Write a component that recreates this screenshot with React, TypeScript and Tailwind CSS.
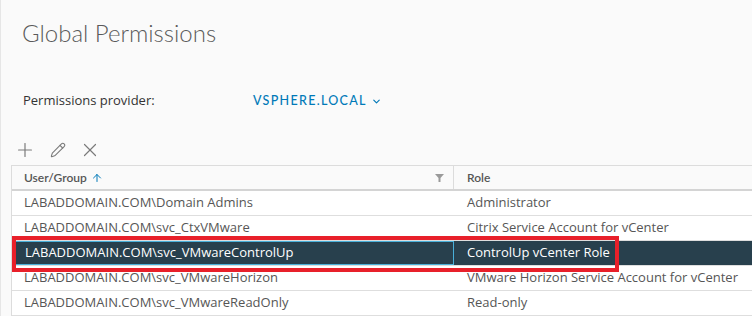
import { Plus, Pencil, X, ChevronDown, ArrowUp } from "lucide-react";

const ROWS = [
  { user: "LABADDOMAIN.COM\\Domain Admins", role: "Administrator" },
  { user: "LABADDOMAIN.COM\\svc_CtxVMware", role: "Citrix Service Account for vCenter" },
  { user: "LABADDOMAIN.COM\\svc_VMwareControlUp", role: "ControlUp vCenter Role", selected: true },
  { user: "LABADDOMAIN.COM\\svc_VMwareHorizon", role: "VMware Horizon Service Account for vCenter" },
  { user: "LABADDOMAIN.COM\\svc_VMwareReadOnly", role: "Read-only" },
];

export default function App() {
  return (
    <div
      className="h-[316px] w-[752px] overflow-hidden border-l border-[#e6e6e6] bg-[#fafafa] text-[#565656]"
      style={{ fontFamily: "Lato, 'Open Sans', sans-serif" }}
    >
      <h1 className="ml-[21px] pt-[17px] h-[49px] text-[24px] leading-[32px] font-light text-[#5a5a5a]">
        Global Permissions
      </h1>

      <div className="mt-[41px] flex h-[22px] items-center text-[13px]">
        <span className="ml-[22px] w-[230px] font-['Open_Sans'] text-[#333]">Permissions provider:</span>
        <button className="flex items-center gap-[4px] text-[12.5px] font-medium tracking-[1.3px] text-[#0079b8]">
          VSPHERE.LOCAL
          <ChevronDown className="h-[11px] w-[11px]" strokeWidth={2.5} />
        </button>
      </div>

      <div className="mt-[27px] flex h-[22px] items-center text-[#7a7a7a]">
        <Plus className="ml-[13px] h-[22px] w-[22px]" strokeWidth={1.3} />
        <Pencil className="ml-[14px] h-[16px] w-[16px]" strokeWidth={1.6} />
        <X className="ml-[13px] h-[22px] w-[22px]" strokeWidth={1.3} />
      </div>

      <div className="relative ml-[10px] mt-[4px] border-l border-t border-[#dcdcdc]">
        <div className="flex h-[25px] border-b-2 border-[#d4d4d4] text-[12px] font-semibold text-[#565656]">
          <div className="flex w-[442px] items-center border-r border-[#dcdcdc] pl-[12px] pr-[9px]">
            <span>User/Group</span>
            <ArrowUp className="ml-[4px] h-[12px] w-[12px] text-[#0079b8]" strokeWidth={2} />
            <svg className="ml-auto" width="9" height="9" viewBox="0 0 9 9">
              <path d="M0 1h9L5.5 5v4h-2V5z" fill="#9a9a9a" />
            </svg>
          </div>
          <div className="flex items-center pl-[13px]">Role</div>
        </div>
        {ROWS.map((r) => (
          <div
            key={r.user}
            className={`flex h-[25px] border-b border-[#dedede] font-['Open_Sans'] text-[13px] ${
              r.selected ? "bg-[#28404d] text-white" : "bg-white text-[#565656]"
            }`}
          >
            <div
              className={`flex w-[442px] items-center pl-[12px] ${
                r.selected ? "border border-[#49afd9] pl-[11px]" : ""
              }`}
            >
              {r.user}
            </div>
            <div className="flex items-center pl-[13px]">{r.role}</div>
          </div>
        ))}
        <div className="pointer-events-none absolute left-[0px] top-[70px] h-[36px] w-[607px] border-4 border-[#e8202a]" />
      </div>
    </div>
  );
}
